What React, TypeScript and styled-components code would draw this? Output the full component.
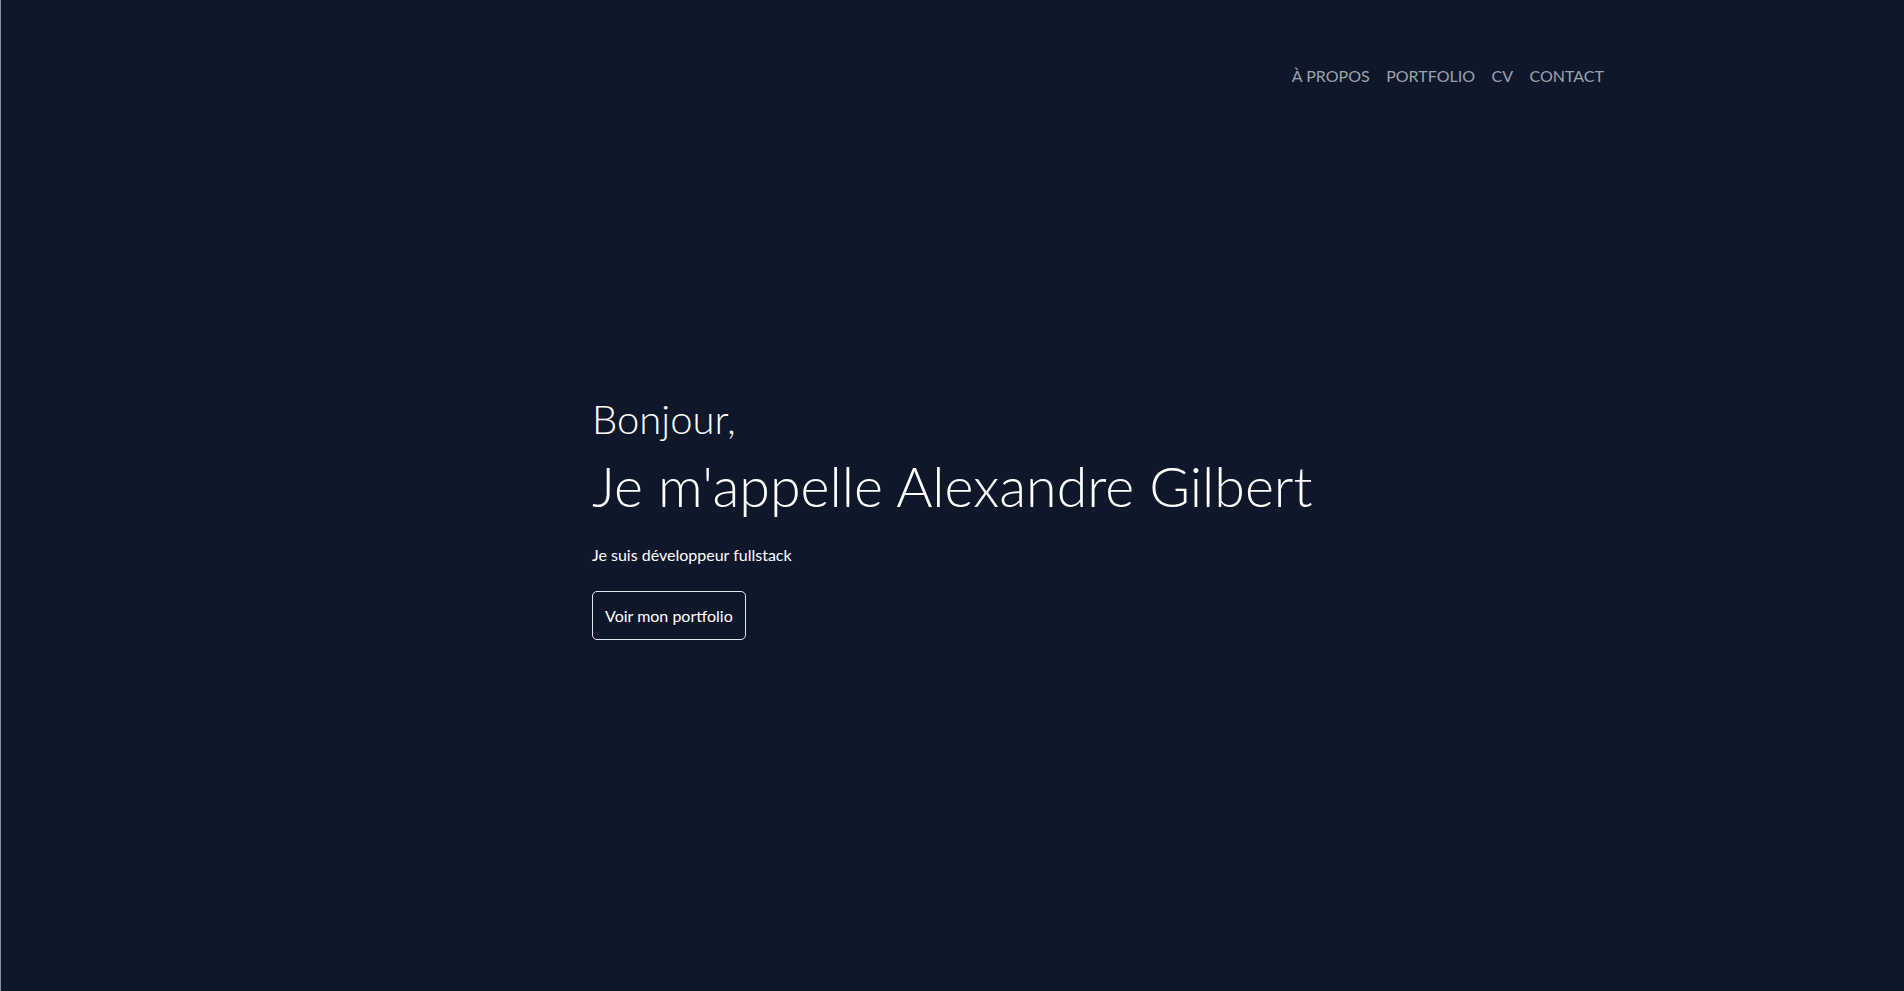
import React from "react";
import styled, { createGlobalStyle } from "styled-components";

const Global = createGlobalStyle`
  html, body { margin: 0; padding: 0; background: #0f172a; }
  body { font-family: Lato, "Open Sans", sans-serif; }
  * { box-sizing: border-box; }
`;

const Page = styled.div`
  min-height: 991px;
  background: #0f172a;
  border-left: 1px solid #8b919c;
  display: flex;
  flex-direction: column;
`;

const Header = styled.header`
  display: flex;
  justify-content: flex-end;
  padding: 64px 300px 0 0;
`;

const Nav = styled.nav`
  display: flex;
  gap: 16.5px;
`;

const NavLink = styled.a`
  font-family: Lato, sans-serif;
  font-size: 16px;
  line-height: 24px;
  color: #9ca3af;
  text-transform: uppercase;
  text-decoration: none;
  cursor: pointer;
`;

const Hero = styled.main`
  width: 721px;
  margin: 0 auto;
  padding-top: 303px;
  display: flex;
  flex-direction: column;
  align-items: flex-start;
  color: #ffffff;
`;

const Greeting = styled.h2`
  margin: 0;
  font-family: Lato, sans-serif;
  font-weight: 300;
  font-size: 40px;
  line-height: 56px;
`;

const Name = styled.h1`
  margin: 0;
  font-family: Lato, sans-serif;
  font-weight: 300;
  font-size: 55.5px;
  line-height: 78px;
  white-space: nowrap;
`;

const Tagline = styled.p`
  margin: 19px 0 0;
  font-family: Lato, sans-serif;
  font-size: 16px;
  line-height: 22px;
`;

const Button = styled.button`
  margin-top: 25px;
  height: 49px;
  padding: 0 12px;
  background: transparent;
  border: 1px solid #e5e7eb;
  border-radius: 5px;
  color: #ffffff;
  font-family: Lato, sans-serif;
  font-size: 16px;
  cursor: pointer;
`;

export default function App() {
  return (
    <>
      <Global />
      <Page>
        <Header>
          <Nav>
            {["À propos", "Portfolio", "CV", "Contact"].map((l) => (
              <NavLink key={l}>{l}</NavLink>
            ))}
          </Nav>
        </Header>
        <Hero>
          <Greeting>Bonjour,</Greeting>
          <Name>Je m'appelle Alexandre Gilbert</Name>
          <Tagline>Je suis développeur fullstack</Tagline>
          <Button>Voir mon portfolio</Button>
        </Hero>
      </Page>
    </>
  );
}
